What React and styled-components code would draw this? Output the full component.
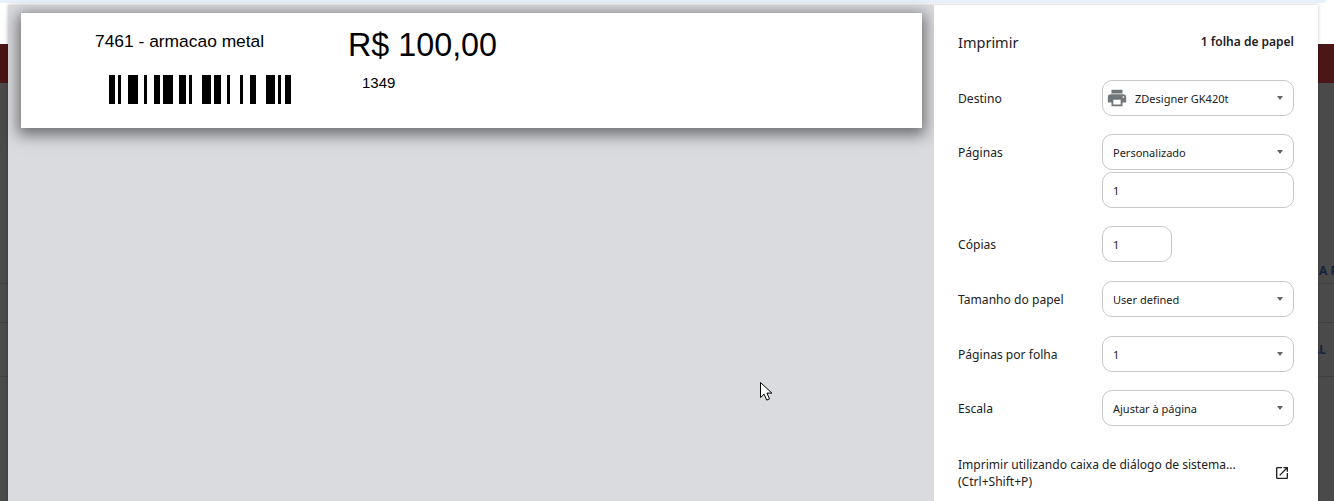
import React from 'react';
import styled, { createGlobalStyle } from 'styled-components';

const GlobalStyle = createGlobalStyle`
  html, body {
    margin: 0;
    height: 100%;
    overflow: hidden;
    background: #fff;
    font-family: 'Noto Sans', 'Liberation Sans', sans-serif;
  }
`;

const Page = styled.div`
  position: relative;
  width: 1334px;
  height: 501px;
  overflow: hidden;
  display: flex;
  flex-direction: column;
`;

const BrowserStrip = styled.div`
  height: 3px;
  margin-right: 8px;
  background: #e8f0fb;
  border-bottom-right-radius: 6px;
`;

const TopGap = styled.div`
  height: 41px;
  background: #fff;
`;

const RedBar = styled.div`
  height: 39px;
  background: #4a1616;
`;

const GrayBody = styled.div`
  flex: 1;
  background: #4a4a4a;
  display: flex;
  flex-direction: column;
`;

const TableRow = styled.div`
  height: ${(props) => props.$height}px;
  border-bottom: 1px solid #404040;
  box-sizing: border-box;
  display: flex;
  align-items: ${(props) => props.$align || 'center'};
  padding-left: ${(props) => props.$inset}px;
  padding-bottom: ${(props) => props.$bottom || 0}px;
  color: #14243a;
  font-size: 12px;
  font-weight: 700;
  white-space: nowrap;
  overflow: hidden;
`;

const Dialog = styled.div`
  position: absolute;
  left: 8px;
  top: 5px;
  width: 1310px;
  height: 496px;
  display: flex;
  box-shadow: 0 0 3px rgba(0, 0, 0, 0.25);
`;

const Preview = styled.div`
  width: 926px;
  background: #dadbdf;
  padding: 8px 12px 0 13px;
  box-sizing: border-box;
`;

const Paper = styled.div`
  height: 115px;
  background: #fff;
  box-shadow: 0 4px 14px 3px rgba(0, 0, 0, 0.5);
  display: grid;
  grid-template-columns: 327px 1fr;
  font-family: 'Liberation Sans', Arial, sans-serif;
  color: #000;
`;

const ItemColumn = styled.div`
  display: flex;
  flex-direction: column;
  align-items: flex-start;
`;

const ItemName = styled.div`
  font-size: 17.4px;
  line-height: 20px;
  margin: 18px 0 0 74px;
`;

const Barcode = styled.svg`
  display: block;
  margin: 24px 0 0 87px;
`;

const PriceColumn = styled.div`
  display: flex;
  flex-direction: column;
`;

const Price = styled.div`
  font-size: 32.3px;
  line-height: 40px;
  margin-top: 12px;
`;

const Code = styled.div`
  font-size: 15px;
  line-height: 16px;
  margin: 10px 0 0 14px;
`;

const Sidebar = styled.div`
  width: 384px;
  background: #fff;
  padding: 0 24px;
  box-sizing: border-box;
  color: #202124;
`;

const Header = styled.div`
  height: 75px;
  display: flex;
  align-items: center;
  justify-content: space-between;
  padding-bottom: 2px;
  box-sizing: border-box;
`;

const Title = styled.div`
  font-size: 14.5px;
  color: #202124;
`;

const SheetCount = styled.div`
  font-size: 12px;
  font-weight: 600;
`;

const Settings = styled.div`
  display: flex;
  flex-direction: column;
  gap: 18px;
`;

const Row = styled.div`
  display: grid;
  grid-template-columns: 144px 192px;
  align-items: start;
  margin-top: ${(props) => (props.$nudge ? 1 : 0)}px;
`;

const Label = styled.div`
  height: 36px;
  font-size: 12.1px;
  line-height: 38px;
`;

const Controls = styled.div`
  display: flex;
  flex-direction: column;
  gap: 2px;
`;

const Field = styled.div`
  height: 36px;
  width: ${(props) => props.$width || 192}px;
  box-sizing: border-box;
  border: 1px solid #c6c8cb;
  border-radius: 10px;
  padding: 0 10px;
  display: flex;
  align-items: center;
  gap: 9px;
  font-size: 11px;
  color: #202124;
`;

const IconField = styled(Field)`
  padding-left: 3px;
  gap: 7px;
`;

const Value = styled.span`
  flex: 1;
`;

const Caret = styled.span`
  width: 0;
  height: 0;
  border-left: 3.5px solid transparent;
  border-right: 3.5px solid transparent;
  border-top: 4px solid #5f6368;
`;

const SystemLink = styled.div`
  margin-top: 30px;
  display: flex;
  align-items: center;
  justify-content: space-between;
  font-size: 12.05px;
  line-height: 17px;
`;

const LinkIcon = styled.svg`
  margin-right: 4px;
`;

const Pointer = styled.svg`
  position: absolute;
  left: 759px;
  top: 381px;
`;

const bars = [
  [109, 6], [118, 3], [128, 10], [144, 3], [154, 6], [163, 10], [179, 7], [189, 3],
  [202, 9], [214, 7], [227, 3], [240, 3], [250, 6], [266, 9], [278, 3], [285, 6],
];

const Select = ({ value }) => (
  <Field>
    <Value>{value}</Value>
    <Caret />
  </Field>
);

const App = () => (
  <Page>
    <GlobalStyle />
    <BrowserStrip />
    <TopGap />
    <RedBar />
    <GrayBody>
      <TableRow $height={201} $inset={1319} $align='flex-end' $bottom={4}>
        A P
      </TableRow>
      <TableRow $height={39} $inset={1311} />
      <TableRow $height={54} $inset={1311}>AL</TableRow>
    </GrayBody>

    <Dialog>
      <Preview>
        <Paper>
          <ItemColumn>
            <ItemName>7461 - armacao metal</ItemName>
            <Barcode width='184' height='29' viewBox='108 75 184 29'>
              {bars.map(([x, w]) => (
                <rect key={x} x={x} y='75' width={w} height='29' fill='#000' />
              ))}
            </Barcode>
          </ItemColumn>
          <PriceColumn>
            <Price>R$ 100,00</Price>
            <Code>1349</Code>
          </PriceColumn>
        </Paper>
      </Preview>

      <Sidebar>
        <Header>
          <Title>Imprimir</Title>
          <SheetCount>1 folha de papel</SheetCount>
        </Header>
        <Settings>
          <Row>
            <Label>Destino</Label>
            <IconField>
              <svg width='22' height='22' viewBox='0 0 24 24' fill='#70757a'>
                <path d='M19 8H5c-1.66 0-3 1.34-3 3v6h4v4h12v-4h4v-6c0-1.66-1.34-3-3-3zm-3 11H8v-5h8v5zm3-7c-.55 0-1-.45-1-1s.45-1 1-1 1 .45 1 1-.45 1-1 1zm-1-9H6v4h12V3z' />
              </svg>
              <Value>ZDesigner GK420t</Value>
              <Caret />
            </IconField>
          </Row>
          <Row>
            <Label>Páginas</Label>
            <Controls>
              <Select value='Personalizado' />
              <Field>1</Field>
            </Controls>
          </Row>
          <Row>
            <Label>Cópias</Label>
            <Field $width={70}>1</Field>
          </Row>
          <Row $nudge>
            <Label>Tamanho do papel</Label>
            <Select value='User defined' />
          </Row>
          <Row $nudge>
            <Label>Páginas por folha</Label>
            <Select value='1' />
          </Row>
          <Row>
            <Label>Escala</Label>
            <Select value='Ajustar à página' />
          </Row>
        </Settings>
        <SystemLink>
          <div>
            Imprimir utilizando caixa de diálogo de sistema...
            <br />
            (Ctrl+Shift+P)
          </div>
          <LinkIcon width='16' height='16' viewBox='0 0 24 24' fill='#202124'>
            <path d='M19 19H5V5h7V3H5a2 2 0 0 0-2 2v14a2 2 0 0 0 2 2h14c1.1 0 2-.9 2-2v-7h-2v7zM14 3v2h3.59l-9.83 9.83 1.41 1.41L19 6.41V10h2V3h-7z' />
          </LinkIcon>
        </SystemLink>
      </Sidebar>
    </Dialog>

    <Pointer width='15' height='22' viewBox='0 0 15 22'>
      <path d='M1.5 1.5v15l3.6-3.4 2.6 6 2.8-1.2-2.6-5.8h5z' fill='#fff' stroke='#000' strokeWidth='1' />
    </Pointer>
  </Page>
);

export default App;
